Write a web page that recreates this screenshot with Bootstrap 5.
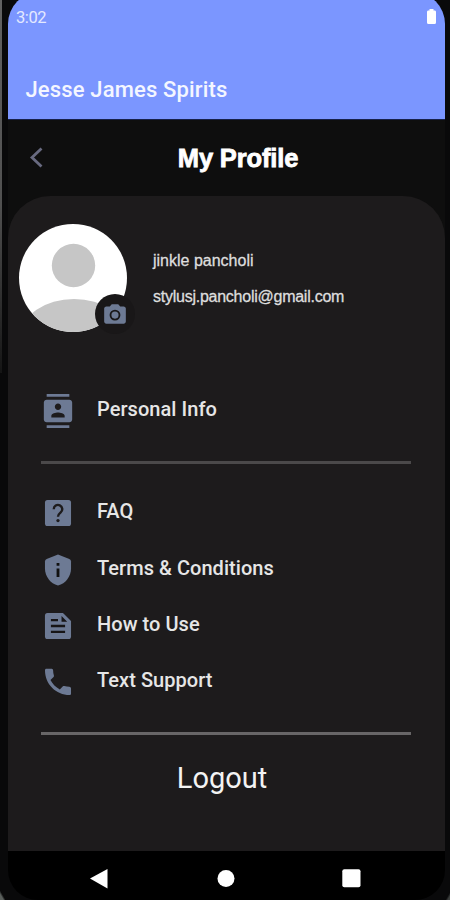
<!DOCTYPE html>
<html lang="en">
<head>
<meta charset="utf-8">
<meta name="viewport" content="width=device-width, initial-scale=1">
<title>My Profile</title>
<link rel="stylesheet" href="https://cdn.jsdelivr.net/npm/bootstrap@5.3.0/dist/css/bootstrap.min.css">
<style>
body { background: #0b0b0c; font-family: Roboto, "Liberation Sans", sans-serif; color: #ececec; }
.device { width: 450px; height: 900px; padding: 0 5px 0 8px; background: linear-gradient(#626262, #505050 55%, #151515) 0 0 / 2px 373px no-repeat, linear-gradient(60deg, #5a5f5c 3px, transparent 5px) 0 100% / 8px 13px no-repeat, linear-gradient(-60deg, #3a3d3c 2px, transparent 4px) 100% 100% / 8px 13px no-repeat, #09090a; }
.app-header { height: 128px; margin-top: -8px; padding: 9px 0 0; background: #7b96ff; border-radius: 32px 32px 0 0; border-bottom: 1px solid #17214b; }
.status { height: 34px; padding: 0 9px 0 8px; font-size: 16.5px; letter-spacing: -.4px; color: #e3e9ff; }
.status svg { margin-top: -3px; }
.app-name { font-size: 22px; font-weight: 500; line-height: 26px; margin: 42px 0 0 17.500px; letter-spacing: .15px; color: #f4f6ff; }
.content-area { background: #0e0e0e; }
.title-bar { height: 76px; }
.title-bar h1 { font: 700 25.5px/30px "Liberation Sans", sans-serif; letter-spacing: -.15px; color: #fff; -webkit-text-stroke: .8px #fff; margin-left: 23px; }
.back { width: 28px; margin-left: 15px; }
.spacer { width: 43px; }
.panel { height: 655px; background: #1d1b1c; border-radius: 42px 42px 0 0; }
.avatar { width: 108px; height: 108px; margin: 28px 0 0 11px; }
.camera { left: 76px; top: 70px; width: 40px; height: 40px; background: #191718; }
.who { font: 16px/20px "Liberation Sans", sans-serif; color: #dedede; margin: 55px 0 0 26px; -webkit-text-stroke: .3px #dedede; }
.who div { height: 36px; white-space: nowrap; }
.who .nm { letter-spacing: 0; }
.who .em { letter-spacing: -.25px; }
.item { height: 56.3px; padding-left: 33px; font-size: 20px; font-weight: 500; letter-spacing: .05px; color: #e6e6e6; }
.item svg { width: 34px; height: 34px; fill: #6d7a94; margin-right: 22px; flex: none; }
.item span { line-height: 24px; margin-top: -4px; white-space: nowrap; }
.first { margin-top: 51px; }
.rule { height: 3px; margin: 0 34px 0 33px; }
.r1 { margin-top: 22px; background: #4b494a; }
.r2 { margin-top: 22px; background: #686667; }
.faq { margin-top: 21px; }
.logout { font-size: 29px; line-height: 34px; color: #f3f3f3; margin-top: 26px; padding-right: 9px; }
.sysnav { height: 49px; background: #000; border-radius: 0 0 30px 30px; }
</style>
<script src="https://cdn.jsdelivr.net/npm/bootstrap@5.3.0/dist/js/bootstrap.bundle.min.js"></script>
</head>
<body class="overflow-hidden">
<div class="device d-flex flex-column overflow-hidden">
  <header class="app-header flex-shrink-0">
    <div class="status d-flex justify-content-between align-items-center">
      <span>3:02</span>
      <svg width="9" height="15" viewBox="0 0 9 15"><path fill="#fff" d="M2.500 0h4v1.500H8Q9 1.500 9 3v10.500Q9 15 7.500 15h-6Q0 15 0 13.500V3Q0 1.500 1 1.500h1.500z"/></svg>
    </div>
    <div class="app-name"><span>Jesse James Spirits</span></div>
  </header>
  <main class="content-area flex-shrink-0">
    <div class="title-bar d-flex align-items-center justify-content-between">
      <svg class="back" height="28" viewBox="0 0 28 28"><path d="M18.500 4.500 9 13.500l9.500 9" fill="none" stroke="#686a80" stroke-width="2.800"/></svg>
      <h1 class="mb-0"><span>My Profile</span></h1>
      <div class="spacer"></div>
    </div>
    <section class="panel d-flex flex-column">
      <div class="d-flex">
        <div class="avatar position-relative flex-shrink-0">
          <svg width="108" height="108" viewBox="0 0 108 108">
            <defs><clipPath id="face"><circle cx="54" cy="54" r="54"/></clipPath></defs>
            <g clip-path="url(#face)"><path fill="#fff" d="M0 0h108v108H0z"/><circle cx="54.500" cy="41.500" r="21.700" fill="#c6c6c6"/><ellipse cx="55" cy="112" rx="53" ry="37" fill="#c6c6c6"/></g>
          </svg>
          <div class="camera position-absolute rounded-circle d-flex align-items-center justify-content-center">
            <svg width="26" height="26" viewBox="0 0 24 24" fill="#6d7a94"><path fill-rule="evenodd" d="M9 3 7.170 5H4c-1.100 0-2 .9-2 2v12c0 1.100.9 2 2 2h16c1.100 0 2-.9 2-2V7c0-1.100-.9-2-2-2h-3.170L15 3H9zm3 15a5 5 0 1 1 0-10 5 5 0 0 1 0 10zm0-1.700a3.300 3.300 0 1 0 0-6.600 3.300 3.300 0 0 0 0 6.600z"/></svg>
          </div>
        </div>
        <div class="who">
          <div class="nm"><span>jinkle pancholi</span></div>
          <div class="em"><span>stylusj.pancholi@gmail.com</span></div>
        </div>
      </div>
      <div class="item first d-flex align-items-center">
        <svg viewBox="0 0 24 24"><path d="M20 0H4v2h16V0zM4 24h16v-2H4v2zM20 4H4c-1.100 0-2 .9-2 2v12c0 1.100.9 2 2 2h16c1.100 0 2-.9 2-2V6c0-1.100-.9-2-2-2zm-8 2.750c1.240 0 2.250 1.010 2.250 2.250s-1.010 2.250-2.250 2.250S9.750 10.240 9.750 9 10.760 6.750 12 6.750zM16.700 16.500H7.300V15.300c0-1.500 3.100-2.300 4.700-2.300s4.700.8 4.700 2.300z"/></svg>
        <span>Personal Info</span>
      </div>
      <div class="rule r1"></div>
      <div class="item d-flex align-items-center faq">
        <svg viewBox="0 0 24 24"><rect x="2.800" y="2.800" width="18.400" height="18.400" rx="1.800"/><path d="M9 9.300a3 3 0 1 1 4.900 2.300c-1.200 1-1.900 1.500-1.900 3" fill="none" stroke="#1d1b1c" stroke-width="1.700"/><circle cx="12" cy="17.300" r="1.150" fill="#1d1b1c"/></svg>
        <span>FAQ</span>
      </div>
      <div class="item d-flex align-items-center">
        <svg viewBox="0 0 24 24"><path d="M12 1 4 4.300Q2.800 4.900 2.800 6v5c0 5.550 3.840 10.740 9.200 12 5.360-1.260 9.200-6.450 9.200-12V6q0-1.100-1.200-1.700z"/><path fill="#111" d="M11 7h2v2h-2zM11 11h2v6h-2z"/></svg>
        <span>Terms &amp; Conditions</span>
      </div>
      <div class="item d-flex align-items-center">
        <svg viewBox="0 0 24 24"><path d="M4.600 2.800H15.500L21.200 8.500V19.400q0 1.800-1.800 1.800H4.600q-1.800 0-1.800-1.800V4.600q0-1.800 1.800-1.800z"/><path fill="#171516" d="M7 7h5v1.600H7zM7 11.200h10v1.600H7zM7 15.400h10V17H7zM14.500 5v4h4z"/></svg>
        <span>How to Use</span>
      </div>
      <div class="item d-flex align-items-center">
        <svg viewBox="0 0 24 24"><path d="M20.010 15.380c-1.230 0-2.420-.2-3.530-.56-.35-.12-.74-.03-1.010.24l-2.200 2.200c-2.830-1.440-5.150-3.750-6.590-6.590l2.200-2.200c.27-.28.35-.67.240-1.020-.37-1.110-.56-2.300-.56-3.530 0-.54-.45-1.200-.99-1.200H3.800c-.54 0-.99.450-.99.990C2.810 13.500 10.500 21.200 20.200 21.200c.54 0 .99-.45.990-.99v-3.650c0-.54-.64-1.180-1.180-1.180z"/></svg>
        <span>Text Support</span>
      </div>
      <div class="rule r2"></div>
      <div class="logout text-center"><span>Logout</span></div>
    </section>
  </main>
  <nav class="sysnav flex-shrink-0">
    <svg class="d-block" width="437" height="49" viewBox="8 851 437 49" fill="#fff"><path d="M90 878.500 107.500 869v19.500z"/><circle cx="226" cy="878.500" r="8.500"/><rect x="342.300" y="869.300" width="18.200" height="18" rx="2"/></svg>
  </nav>
</div>
</body>
</html>
